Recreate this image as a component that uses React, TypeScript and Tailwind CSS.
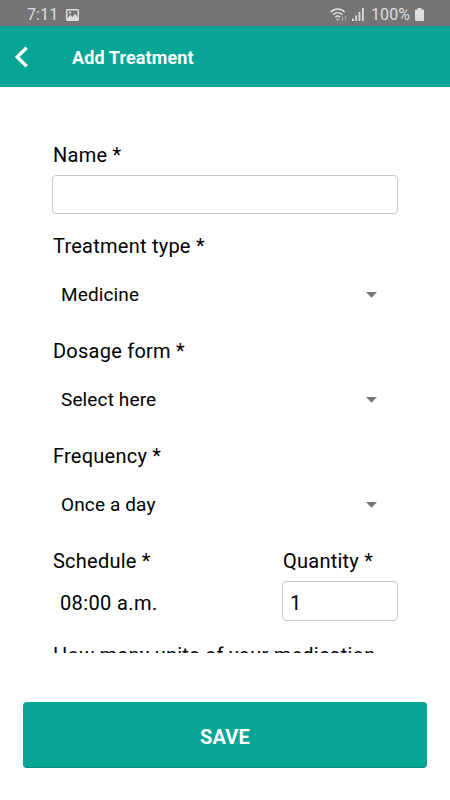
import type { ReactNode } from 'react';

const selects = [
  { label: 'Treatment type *', value: 'Medicine' },
  { label: 'Dosage form *', value: 'Select here' },
  { label: 'Frequency *', value: 'Once a day' },
];

function StatusBar() {
  return (
    <div className="flex h-[26px] shrink-0 items-center bg-[#757575] pt-[3px] text-[#dedede]">
      <span className="ml-[27px] w-[39px] text-[16px] leading-5 tracking-[0.1px]">7:11</span>
      <svg className="h-3 w-[13px]" viewBox="0 0 13 12" fill="none">
        <rect x="0.75" y="0.75" width="11.5" height="10.5" rx="0.8" stroke="currentColor" strokeWidth="1.5" />
        <path d="M1 10 4.3 5.8 6.3 8.2 9 4.8 12 9v2H1z" fill="currentColor" />
        <circle cx="4" cy="3.6" r="1.1" fill="currentColor" />
      </svg>
      <svg className="ml-auto h-[14px] w-[18px]" viewBox="0 0 18 14" fill="none" stroke="currentColor" strokeWidth="1.5">
        <path d="M.7 4.100c4-4 10-4 14 0M3 6.700c2.800-2.700 6.600-2.700 9.400 0M5.200 9.200c1.500-1.400 3.500-1.400 5 0" />
        <path d="M6 10.700h3.400L7.700 12.500z" fill="currentColor" stroke="none" />
        <path d="M12.500 8.500v4M11.300 11l1.200 1.500 1.200-1.500M15.500 12.500v-4M14.300 10l1.200-1.500 1.200 1.500" stroke="#a5a5a5" strokeWidth="0.9" />
      </svg>
      <svg className="ml-1 h-[13px] w-[12px]" viewBox="0 0 12 13" fill="currentColor">
        <path d="M0 10.400h1.800V13H0zM3.300 7.500h1.800V13H3.300zM6.600 4h1.800v9H6.600zM10 0h1.800v13H10z" />
      </svg>
      <span className="ml-[7px] w-[40px] text-[16px] leading-5 tracking-[0.1px]">100%</span>
      <svg className="mr-[26px] ml-[4px] h-[13px] w-[9px]" viewBox="0 0 9 13" fill="currentColor">
        <path d="M2.600 0h3.800v1.500H8a1 1 0 0 1 1 1V12a1 1 0 0 1-1 1H1a1 1 0 0 1-1-1V2.500a1 1 0 0 1 1-1h1.600z" />
      </svg>
    </div>
  );
}

function Label({ children }: { children: ReactNode }) {
  return <label className="block h-6 text-[20px] leading-6 tracking-[0.24px] whitespace-nowrap">{children}</label>;
}

export default function App() {
  return (
    <div className="flex h-[800px] w-[450px] flex-col overflow-hidden bg-white font-['Roboto',sans-serif] text-black">
      <StatusBar />
      <header className="flex h-[61px] shrink-0 items-center bg-[#06a595] pt-px text-white">
        <svg className="ml-[14px] h-[22px] w-[15px]" viewBox="0 0 15 22" fill="none" stroke="currentColor" strokeWidth="3.4">
          <path d="M12.700 1.700 3.200 11l9.500 9.300" />
        </svg>
        <h1 className="ml-[43px] pt-px text-[18px] leading-6 font-bold tracking-[0.1px]">Add Treatment</h1>
      </header>

      <main className="h-[566px] shrink-0 overflow-hidden pr-[52px] pl-[53px] pt-14">
        <Label>Name *</Label>
        <input className="mt-2 mb-5 -ml-px block h-[39px] w-[346px] rounded-[4px] border border-[#c8c8c8] px-[7px] text-[20px]" />

        {selects.map(s => (
          <div key={s.label} className="mb-2">
            <Label>{s.label}</Label>
            <div className="flex h-[73px] items-center justify-between pr-[21px] pl-[8px]">
              <span className="text-[19px] leading-[25px] tracking-[0.13px]">{s.value}</span>
              <svg className="h-[6px] w-[11px]" viewBox="0 0 11 6" fill="#757575">
                <path d="M0 0h11L5.500 5.700z" />
              </svg>
            </div>
          </div>
        ))}

        <div className="flex">
          <div className="w-[230px]">
            <Label>Schedule *</Label>
            <p className="mt-[18px] pl-[7px] text-[20px] leading-6 tracking-[0.38px]">08:00 a.m.</p>
          </div>
          <div>
            <Label>Quantity *</Label>
            <input
              className="mt-2 -ml-px block h-[40px] w-[116px] rounded-[4px] border border-[#c8c8c8] px-[7px] pt-[3px] text-[20px]"
              defaultValue="1"
            />
          </div>
        </div>
        <div className="mt-[22px]">
          <Label>How many units of your medication</Label>
        </div>
      </main>

      <footer className="px-[23px] pt-[49px]">
        <button className="block h-[66px] w-[404px] rounded-[4px] border-b border-[#058d80] bg-[#06a595] pt-[5px] text-[20px] font-bold tracking-[0.2px] text-white">
          SAVE
        </button>
      </footer>
    </div>
  );
}
